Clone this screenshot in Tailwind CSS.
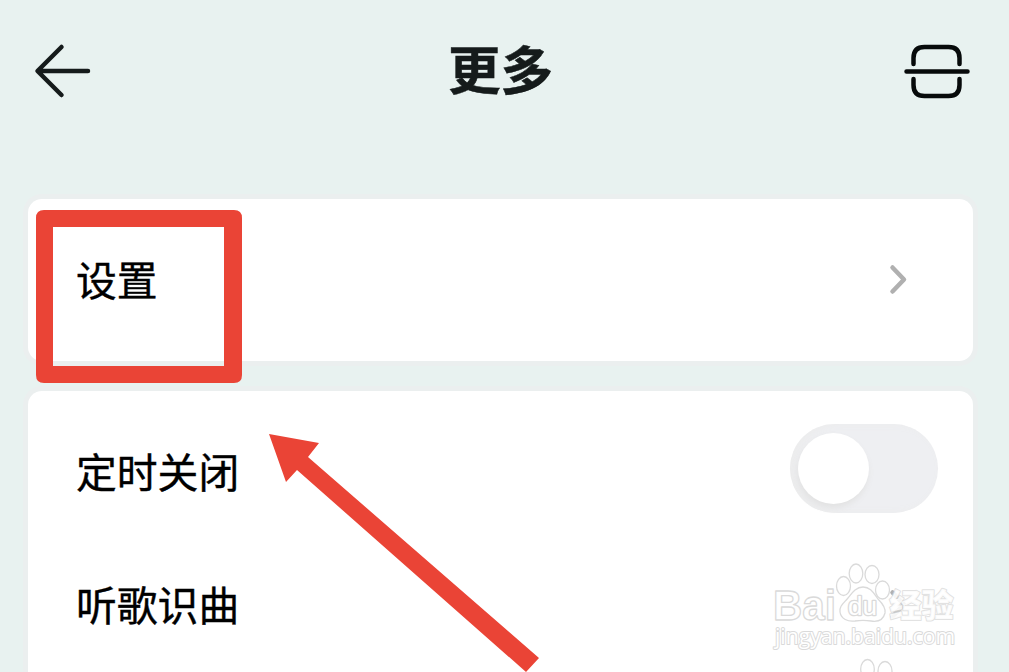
<!DOCTYPE html>
<html lang="zh-CN">
<head>
  <meta charset="UTF-8">
  <title>更多</title>
  <meta name="viewport" content="width=device-width, initial-scale=1">
  <script src="https://cdn.jsdelivr.net/npm/@tailwindcss/browser@4"></script>
</head>
<body class="bg-[#e8f2f0] font-['Noto_Sans_CJK_SC',sans-serif] text-black">

<div class="relative h-[672px] w-[1009px] overflow-hidden">

  <!-- Header -->
  <header class="flex h-[199px] items-start justify-between pt-[39px] pr-[37px] pl-[32px]">
    <button class="flex h-16 w-[66px] items-center" aria-label="返回">
      <svg class="h-16 w-[66px]" viewBox="0 0 66 64" fill="none" stroke="#151b1b" stroke-width="4.5" stroke-linecap="round" stroke-linejoin="round">
        <path d="M56 32H6M29.500 8L5.500 32l24 24"/>
      </svg>
    </button>
    <h1 class="-mt-1 pr-px text-[52.5px] leading-[64px] font-bold text-[#151b1b] [-webkit-text-stroke:0.5px_#151b1b]">更多</h1>
    <button aria-label="扫一扫">
      <svg class="h-16 w-[68px]" viewBox="0 0 68 64" fill="none" stroke="#070b0b" stroke-width="4.500" stroke-linecap="round">
        <path d="M9.500 25v-6q0-11 11-11h24q11 0 11 11v6M9.500 40v6q0 11 11 11h24q11 0 11-11v-6M2.500 32.500h61"/>
      </svg>
    </button>
  </header>

  <main class="flex flex-col gap-[30px] pr-[36px] pl-[28px]">
    <section class="rounded-[14px] bg-white shadow-[0_0_0_5px_#ebefef]">
      <div class="flex h-[162px] items-center justify-between pr-[64px] pl-[48px] text-[40.8px] leading-[60px] [-webkit-text-stroke:0.4px_#000]">
        <span class="-mt-[3px]">设置</span>
        <svg class="h-8 w-5" viewBox="0 0 20 32" fill="none" stroke="#b0b0b0" stroke-width="4.500" stroke-linecap="round" stroke-linejoin="round">
          <path d="M3.500 3.500L15 15.500 3.500 27.500"/>
        </svg>
      </div>
    </section>

    <section class="h-[320px] rounded-t-[14px] bg-white shadow-[0_0_0_5px_#ebefef]">
      <div class="flex h-[154px] items-center justify-between pr-[35px] pl-[48px] text-[40.8px] leading-[60px] [-webkit-text-stroke:0.4px_#000]">
        <span class="mt-1.5">定时关闭</span>
        <div class="flex h-[89px] w-[148px] items-center rounded-full bg-[#eeeff2] pl-2 shadow-[inset_4px_0_8px_#ececec]">
          <div class="h-[71px] w-[71px] rounded-full bg-white shadow-[-1px_4px_6px_#e2e2e2]"></div>
        </div>
      </div>
      <div class="flex h-[120px] items-center justify-between pr-[64px] pl-[48px] text-[40.8px] leading-[60px] [-webkit-text-stroke:0.4px_#000]">
        <span class="-mt-[3px]">听歌识曲</span>
        <svg class="h-8 w-5" viewBox="0 0 20 32" fill="none" stroke="#b0b0b0" stroke-width="4.500" stroke-linecap="round" stroke-linejoin="round">
          <path d="M3.500 3.500L15 15.500 3.500 27.500"/>
        </svg>
      </div>
    </section>
  </main>

  <!-- Annotation box, arrow and watermark -->
  <svg class="pointer-events-none absolute inset-0 h-[672px] w-[1009px]" viewBox="0 0 1009 672">
    <path fill="#ea4436" fill-rule="evenodd" d="M44 210H234q8 0 8 8V375q0 8-8 8H44q-8 0-8-8V218q0-8 8-8zM53 227V366H224V227z"/>
    <path fill="#ea4436" d="M269 434l50 9-11 14 231 201-13 14L297 470l-11 12z"/>

    <g fill="#fff" stroke="#dadada" stroke-width="1.300" stroke-linejoin="round">
      <text class="font-['Liberation_Sans',sans-serif] text-[42px] font-bold" x="773" y="620" textLength="63" lengthAdjust="spacingAndGlyphs">Bai</text>
      <path d="M863 587c8 0 11 7 15 12 5 5 8 9 7 14-2 8-8 9-14 8-6-1-10-1-16 0-7 1-14-2-15-9-1-6 4-9 8-14 4-5 8-11 15-11z"/>
      <ellipse cx="843.500" cy="586" rx="7" ry="9.500"/>
      <ellipse cx="856" cy="573.500" rx="6.800" ry="9.500"/>
      <ellipse cx="872" cy="574.500" rx="7" ry="9"/>
      <ellipse cx="882.500" cy="590" rx="7" ry="9"/>
      <text class="font-['Liberation_Sans',sans-serif] text-[25px] [paint-order:stroke]" x="848" y="615" textLength="29" lengthAdjust="spacingAndGlyphs" stroke-width="2.600">du</text>
      <text class="font-['Noto_Sans_CJK_SC',sans-serif] text-[32px] font-black [paint-order:stroke]" x="889.500" y="617" fill-opacity="0.9" stroke-opacity="0.8" stroke-width="2">经验</text>
      <text class="font-['Open_Sans',sans-serif] text-[21px] [paint-order:stroke]" x="775" y="643.500" textLength="180" lengthAdjust="spacingAndGlyphs" stroke-width="2">jingyan.baidu.com</text>
      <ellipse cx="867.500" cy="669" rx="6.800" ry="9.500"/>
      <ellipse cx="885" cy="671" rx="7" ry="9.500"/>
    </g>
  </svg>
</div>

</body>
</html>
